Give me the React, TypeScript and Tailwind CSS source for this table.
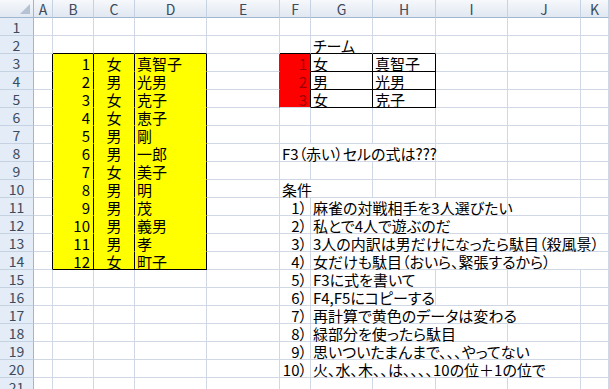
import React from 'react';

type Cell = {
    text?: string;
    span?: number;
    align?: 'l' | 'c' | 'r';
    bg?: string;
    rc?: string;
    bc?: string;
    color?: string;
};

const COLS = ['A', 'B', 'C', 'D', 'E', 'F', 'G', 'H', 'I', 'J', 'K'];
const GRID = 'border-[#d0d7e5]';

const spanCls: Record<number, string> = {
    1: '',
    2: 'col-span-2',
    3: 'col-span-3',
    4: 'col-span-4',
    5: 'col-span-5',
};

const members: [string, string, string][] = [
    ['1', '女', '真智子'],
    ['2', '男', '光男'],
    ['3', '女', '克子'],
    ['4', '女', '恵子'],
    ['5', '男', '剛'],
    ['6', '男', '一郎'],
    ['7', '女', '美子'],
    ['8', '男', '明'],
    ['9', '男', '茂'],
    ['10', '男', '義男'],
    ['11', '男', '孝'],
    ['12', '女', '町子'],
];

const rules: [string, string, number][] = [
    ['1）', '麻雀の対戦相手を3人選びたい', 3],
    ['2）', '私とで4人で遊ぶのだ', 3],
    ['3）', '3人の内訳は男だけになったら駄目（殺風景）', 5],
    ['4）', '女だけも駄目（おいら、緊張するから）', 5],
    ['5）', 'F3に式を書いて', 2],
    ['6）', 'F4,F5にコピーする', 2],
    ['7）', '再計算で黄色のデータは変わる', 4],
    ['8）', '緑部分を使ったら駄目', 3],
    ['9）', '思いついたまんまで、、、やってない', 4],
    ['10）', '火、水、木、、は、、、、10の位＋1の位で', 4],
];

// row number -> column index -> cell
function buildSheet() {
    const sheet: Record<number, Record<number, Cell>> = {};
    const set = (r: number, c: number, cell: Cell) => {
        sheet[r] = sheet[r] || {};
        sheet[r][c] = { ...(sheet[r][c] || {}), ...cell };
    };

    // yellow table B3:D14
    set(2, 1, { bc: 'border-b-black' });
    set(2, 2, { bc: 'border-b-black' });
    set(2, 3, { bc: 'border-b-black' });
    members.forEach(([n, s, name], i) => {
        const r = 3 + i;
        const last = i === members.length - 1;
        const bc = last ? 'border-b-black' : 'border-b-[#ffff00]';
        set(r, 0, { rc: 'border-r-black' });
        set(r, 1, { text: n, align: 'r', bg: 'bg-[#ffff00]', rc: 'border-r-black', bc });
        set(r, 2, { text: s, align: 'c', bg: 'bg-[#ffff00]', rc: 'border-r-black', bc });
        set(r, 3, { text: name, align: 'l', bg: 'bg-[#ffff00]', rc: 'border-r-black', bc });
    });

    // team table F3:H5
    set(2, 5, { bc: 'border-b-black' });
    set(2, 6, { text: 'チーム', bc: 'border-b-black' });
    set(2, 7, { bc: 'border-b-black' });
    members.slice(0, 3).forEach(([, s, name], i) => {
        const r = 3 + i;
        set(r, 4, { rc: 'border-r-[#ff0000]' });
        set(r, 5, {
            text: String(i + 1),
            align: 'r',
            bg: 'bg-[#ff0000]',
            color: 'text-[#9c0000]',
            rc: 'border-r-black',
            bc: i === 2 ? undefined : 'border-b-[#ff0000]',
        });
        set(r, 6, { text: s, rc: 'border-r-black', bc: 'border-b-black' });
        set(r, 7, { text: name, rc: 'border-r-black', bc: 'border-b-black' });
    });

    set(8, 5, { text: 'F3（赤い）セルの式は???', span: 3 });
    set(10, 5, { text: '条件', span: 2 });
    rules.forEach(([no, txt, span], i) => {
        set(11 + i, 5, { text: no, align: 'r' });
        set(11 + i, 6, { text: txt, span });
    });
    return sheet;
}

const sheet = buildSheet();

function SheetCell({ cell }: { cell: Cell }) {
    const align = cell.align === 'r' ? 'text-right pr-[3px]' : cell.align === 'c' ? 'text-center' : 'text-left pl-[2px]';
    return (
        <div
            className={`h-[18px] border-r border-b ${GRID} ${cell.rc || ''} ${cell.bc || ''} ${cell.bg || ''} ${cell.color || 'text-black'} ${align} ${spanCls[cell.span || 1]} whitespace-nowrap leading-[17px] pt-[1px]`}
        >
            {cell.text}
        </div>
    );
}

export default function App() {
    const rowNums = Array.from({ length: 21 }, (_, i) => i + 1);

    return (
        <div
            className="h-[389px] w-[609px] overflow-hidden bg-white text-[15px] [font-feature-settings:'palt'] font-['Noto_Sans_CJK_JP','Liberation_Sans',sans-serif]"
        >
            <div className="grid grid-cols-[34px_19px_41px_41px_72px_73px_31px_62px_63px_72px_73px_1fr]">
                {/* column headers */}
                <div className="relative h-[18px] border-r border-b border-[#9eb6ce] bg-gradient-to-b from-[#f6f8fb] to-[#e1e8f2]">
                    <svg className="absolute right-[3px] bottom-[3px]" width="10" height="10" viewBox="0 0 10 10">
                        <polygon points="10,0 10,10 0,10" fill="#b4c2d3" />
                    </svg>
                </div>
                {COLS.map((c) => (
                    <div
                        key={c}
                        className="h-[18px] border-r border-b border-r-[#c5d2e2] border-b-[#9eb6ce] bg-gradient-to-b from-[#f6f8fb] to-[#e1e8f2] text-center text-[14px] leading-[18px] text-[#3c4a5c]"
                    >
                        {c}
                    </div>
                ))}

                {rowNums.map((r) => {
                    const cells: React.ReactNode[] = [];
                    let col = 0;
                    while (col < COLS.length) {
                        const cell = sheet[r]?.[col] || {};
                        cells.push(<SheetCell key={`${r}-${col}`} cell={cell} />);
                        col += cell.span || 1;
                    }
                    return (
                        <React.Fragment key={r}>
                            <div className="h-[18px] border-r border-b border-r-[#9eb6ce] border-b-[#c5d2e2] bg-[#e4ecf7] text-center text-[14px] leading-[18px] text-[#3c4a5c]">
                                {r}
                            </div>
                            {cells}
                        </React.Fragment>
                    );
                })}
            </div>
        </div>
    );
}
